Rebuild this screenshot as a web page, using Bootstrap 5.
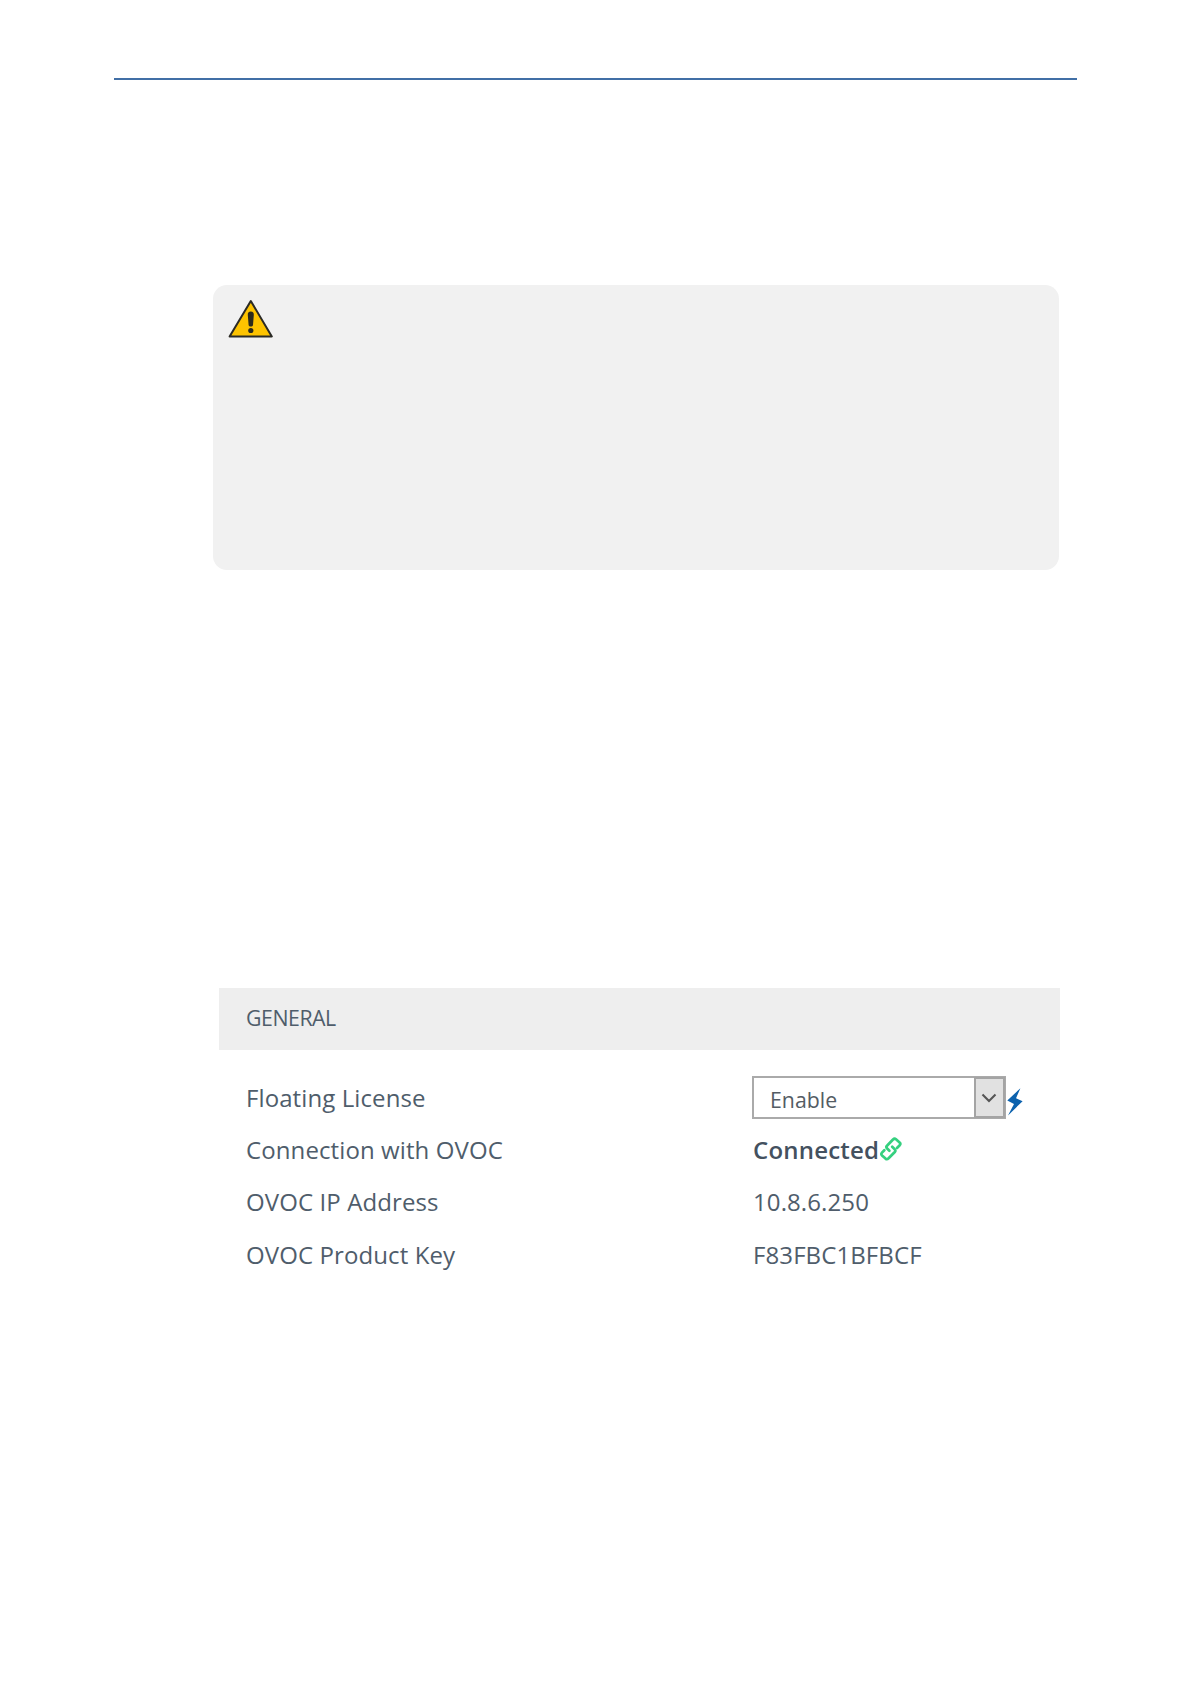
<!DOCTYPE html>
<html lang="en">

<head>
  <title>Floating License</title>
  <meta charset="utf-8">
  <meta name="viewport" content="width=device-width, initial-scale=1">
  <link href="https://cdn.jsdelivr.net/npm/bootstrap@5.3.2/dist/css/bootstrap.min.css" rel="stylesheet">
  <script src="https://cdn.jsdelivr.net/npm/bootstrap@5.3.2/dist/js/bootstrap.bundle.min.js"></script>
  <style>
    body {
      font-family: "Open Sans", "Noto Sans", sans-serif;
      color: #4f5d6b;
      background: #fff;
    }

    .sheet {
      height: 1684px;
      padding: 78px 114px 0;
      overflow: hidden;
    }

    .top-rule {
      height: 2px;
      background: #416fa6;
    }

    .note-box {
      height: 285px;
      margin: 205px 18px 0 99px;
      padding: 14px 15px;
      border-radius: 14px;
      background: #f1f1f1;
    }

    .settings {
      margin: 418px 17px 0 105px;
    }

    .settings-title {
      height: 62px;
      padding: 0 0 2px 27px;
      background: #eee;
      font-size: 21.3px;
      letter-spacing: -0.45px;
    }

    .settings-body {
      padding: 22px 0 0 27px;
      font-size: 24px;
      letter-spacing: 0.1px;
    }

    .setting {
      height: 52.2px;
      line-height: 52px;
    }

    .setting-name {
      width: 507px;
    }

    .picker {
      width: 254px;
      height: 43px;
      margin: -1px 0 0 -1px;
      border: 2px solid #aaa;
    }

    .picker select {
      padding: 4px 0 0 16px;
      font-size: 21.3px;
      line-height: 1;
      color: #545c64;
      appearance: none;
      outline: 0;
    }

    .picker-arrow {
      width: 31px;
      margin: -1px;
      padding-right: 2px;
      border: 2px solid #a4a4a4;
      background: #e1e1e1;
    }

    .state {
      font-weight: 600;
      letter-spacing: 0.2px;
      color: #44515f;
    }

    .link-icon {
      margin-top: 12px;
    }
  </style>
</head>

<body>

  <div class="sheet">
    <div class="top-rule"></div>

    <div class="note-box">
      <svg class="d-block" width="46" height="40" viewBox="0 0 46 40">
        <path d="M22.8 2 L43.8 37.5 H1.6 Z" fill="#fdc300" stroke="#2b2a25" stroke-width="2" stroke-linejoin="round" />
        <path d="M22.8 12.5 c2.2 0 3.2 1.3 3 3.4 l-.8 10 c-.3 2.2 -4.1 2.2 -4.4 0 l-.8 -10 c-.2 -2.1 .8 -3.4 3 -3.4z" fill="#2b2a1c" />
        <circle cx="22.8" cy="31.5" r="2.6" fill="#2b2a1c" />
      </svg>
    </div>

    <div class="settings">
      <div class="settings-title d-flex align-items-center">GENERAL</div>

      <div class="settings-body">
        <div class="setting d-flex">
          <label for="floating" class="setting-name">Floating License</label>
          <div class="d-flex align-items-center">
            <div class="picker d-flex">
              <select id="floating" class="flex-grow-1 border-0 bg-white">
                <option selected>Enable</option>
                <option>Disable</option>
              </select>
              <span class="picker-arrow d-flex align-items-center justify-content-center">
                <svg width="16" height="10" viewBox="0 0 16 10">
                  <path d="M1.5 1.5 L8 8 L14.5 1.5" fill="none" stroke="#555" stroke-width="2.1" />
                </svg>
              </span>
            </div>
            <!-- lightning bolt -->
            <svg class="mt-2" width="18" height="30" viewBox="0 0 18 30">
              <path d="M14.4 1.2 L1.3 13.6 L8 17 L2 28.4 L16.6 14.2 L10 11.2 Z" fill="#0c62ae" />
            </svg>
          </div>
        </div>

        <div class="setting d-flex">
          <div class="setting-name">Connection with OVOC</div>
          <div class="state d-flex">
            <span>Connected</span>
            <svg class="link-icon" width="24" height="26" viewBox="0 0 24 26">
              <g fill="none" stroke="#35d07f" stroke-width="2.7" stroke-linecap="round" stroke-linejoin="round">
                <path d="M10.4 14.8 L7.9 12.3 Q6.8 11 8 9.8 L14 3.5 Q15.5 2.1 17 3.3 L20.6 6.4 Q22 7.7 20.7 9.2 L18 12" />
                <path d="M13.2 10.8 L15.7 13.3 Q17 14.6 15.8 16 L9.6 22.3 Q8 23.8 6.5 22.6 L3 19.4 Q1.7 18 3 16.6 L5.3 14.2" />
              </g>
            </svg>
          </div>
        </div>

        <div class="setting d-flex">
          <div class="setting-name">OVOC IP Address</div>
          <div>10.8.6.250</div>
        </div>

        <div class="setting d-flex">
          <div class="setting-name">OVOC Product Key</div>
          <div>F83FBC1BFBCF</div>
        </div>
      </div>
    </div>
  </div>

</body>

</html>
